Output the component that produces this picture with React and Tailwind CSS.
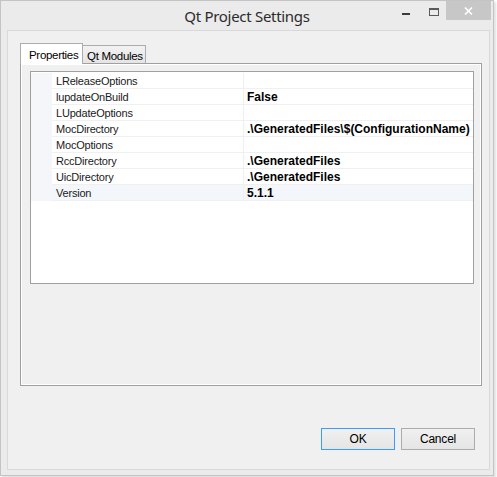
import React from "react";

const ROWS = [
  { name: "LReleaseOptions", value: "" },
  { name: "lupdateOnBuild", value: "False" },
  { name: "LUpdateOptions", value: "" },
  { name: "MocDirectory", value: ".\\GeneratedFiles\\$(ConfigurationName)" },
  { name: "MocOptions", value: "" },
  { name: "RccDirectory", value: ".\\GeneratedFiles" },
  { name: "UicDirectory", value: ".\\GeneratedFiles" },
  { name: "Version", value: "5.1.1", selected: true },
];

function TitleBar() {
  return (
    <div className="grid grid-cols-[1fr_auto_1fr] h-[29px]">
      <div />
      <div className="self-center pt-[2px] text-[15px] text-[#2b2b2b] font-['Noto_Sans',sans-serif] tracking-[-0.3px]">
        Qt Project Settings
      </div>
      <div className="flex justify-end items-start pr-[2px]">
        {/* minimize */}
        <div className="w-[26px] h-[19px] flex justify-center pt-[12px]">
          <div className="w-[8px] h-[2px] bg-[#3c3c3c]" />
        </div>
        {/* maximize */}
        <div className="w-[27px] h-[19px] flex justify-center pt-[7px] pl-[2px]">
          <div className="w-[10px] h-[8px] border border-[#5a5a5a] border-t-2" />
        </div>
        {/* close */}
        <div className="w-[45px] h-[19px] bg-[#c7c7c7] flex items-center justify-center">
          <svg width="9" height="8" viewBox="0 0 9 8">
            <path d="M1 0.5 L8 7.5 M8 0.5 L1 7.5" stroke="white" strokeWidth="1.6" />
          </svg>
        </div>
      </div>
    </div>
  );
}

function PropertyGrid() {
  return (
    <div className="w-[444px] h-[213px] border border-[#a0a0a0] bg-white pt-px">
      {ROWS.map((row) => (
        <div key={row.name} className="flex h-[16px]">
          <div className="w-[21px] bg-[#f4f6fa]" />
          <div
            className={`flex flex-1 border-b border-[#f0f0f0] ${
              row.selected ? "bg-[#f3f6fb]" : ""
            }`}
          >
            <div className="w-[192px] border-r border-[#f0f0f0] pl-[4px] pt-px leading-[15px] text-[#1a1a1a]">
              {row.name}
            </div>
            <div className="flex-1 pl-[3px] pt-px leading-[15px] text-[12px] font-bold text-black tracking-[0px]">
              {row.value}
            </div>
          </div>
        </div>
      ))}
    </div>
  );
}

function Button({ children, primary }) {
  return (
    <button
      className={`w-[74px] h-[22px] border bg-gradient-to-b from-[#f0f0f0] to-[#e5e5e5] text-[12px] text-black ${
        primary ? "border-[#3c9bff]" : "border-[#acacac]"
      }`}
    >
      {children}
    </button>
  );
}

export default function App() {
  return (
    <div className="w-[497px] h-[477px] bg-white font-['Liberation_Sans',Arial,sans-serif] text-[11px] tracking-[-0.2px]">
      <div className="w-[494px] h-[476px] bg-[#ebebeb] border border-[#c4c4c4] shadow-[2px_2px_2px_rgba(0,0,0,0.12)] flex flex-col">
        <TitleBar />
        <div className="flex-1 ml-[6px] mr-[3px] mb-[5px] border border-[#d9d9d9] bg-[#f0f0f0] flex flex-col pt-[11px] pl-[12px]">
          {/* tabs */}
          <div className="flex items-end h-[21px]">
            <div className="h-[21px] w-[63px] border border-b-0 border-[#acacac] bg-white mb-[-1px] relative z-10 pl-[8px] pt-[3px] text-[11.5px] tracking-[-0.3px]">
              Properties
            </div>
            <div className="h-[18px] w-[63px] border border-l-0 border-b-0 border-[#acacac] bg-gradient-to-b from-[#f2f2f2] to-[#e5e5e5] pl-[4px] pt-[2px] text-[11.5px] tracking-[-0.3px]">
              Qt Modules
            </div>
          </div>
          {/* pane */}
          <div className="w-[462px] h-[323px] border border-[#a0a0a0] shadow-[inset_-1px_-1px_0_white,inset_1px_1px_0_white] pl-[9px] pt-[7px]">
            <PropertyGrid />
          </div>
          {/* buttons */}
          <div className="flex justify-end gap-[6px] pr-[14px] mt-[42px]">
            <Button primary>OK</Button>
            <Button>Cancel</Button>
          </div>
        </div>
      </div>
    </div>
  );
}
